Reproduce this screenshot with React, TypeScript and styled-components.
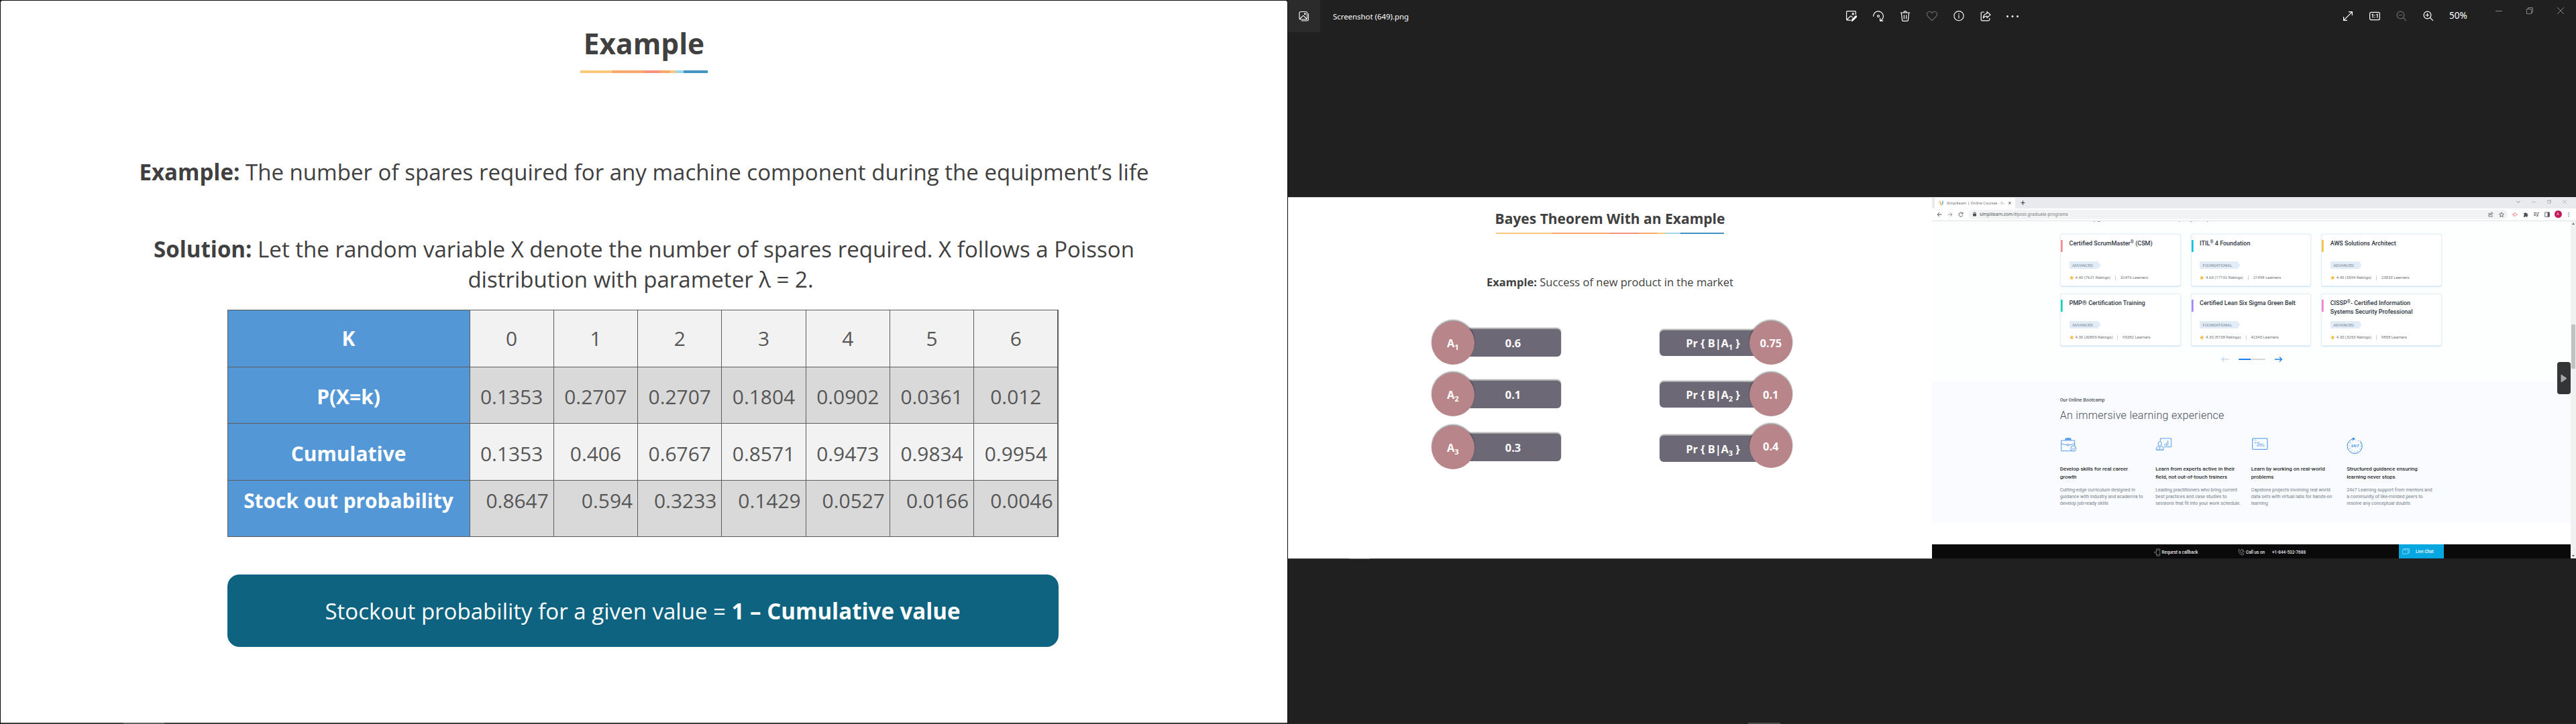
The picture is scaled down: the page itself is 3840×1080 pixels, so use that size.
import React, { ReactNode } from "react";
import styled, { createGlobalStyle } from "styled-components";

const GlobalStyle = createGlobalStyle`
  * { box-sizing: border-box; }
  html, body { margin: 0; padding: 0; }
  body { width: 3840px; height: 1080px; overflow: hidden; background: #202020; }
  p, h1, h2, h3 { margin: 0; font-weight: inherit; font-size: inherit; }
  svg { display: block; flex: none; }
`;

const slideFont = `"Open Sans", "Noto Sans", sans-serif`;
const siteFont = `Roboto, "Noto Sans", sans-serif`;
const uiFont = `"Noto Sans", "Open Sans", sans-serif`;

const Desktop = styled.div`
  display: flex;
  width: 3840px;
  height: 1080px;
`;

/* ---------- Poisson slide ---------- */

const Slide = styled.section`
  display: flex;
  flex-direction: column;
  align-items: center;
  width: 1920px;
  height: 1080px;
  background: #fff;
  border: 1px solid #0c0c10;
  border-bottom: 0;
  border-radius: 4px 4px 0 0;
  color: #404040;
  font-family: ${slideFont};
  font-size: 33.06px;
  line-height: 45px;
  white-space: nowrap;
`;

const SlideTitle = styled.h1`
  margin-top: 34px;
  font-size: 42.4px;
  line-height: 60px;
  font-weight: 700;
`;

const Rule = styled.div<{ $w: number; $h: number; $top: number }>`
  flex: none;
  width: ${(p) => p.$w}px;
  height: ${(p) => p.$h}px;
  margin-top: ${(p) => p.$top}px;
  background: linear-gradient(
    90deg,
    #fcc97c 0 24.6%,
    #faa76c 24.6% 50%,
    #f5937c 50% 62.7%,
    #faa76c 62.7% 70.6%,
    #fcc97c 70.6% 74.5%,
    #9dd5ea 74.5% 81%,
    #4294c1 81%
  );
`;

const Para = styled.p<{ $top: number; $size?: number }>`
  margin-top: ${(p) => p.$top}px;
  font-size: ${(p) => p.$size ?? 33.06}px;
  text-align: center;
`;

const SecondLine = styled.span`
  display: block;
  padding-right: 10px;
`;

const Grid = styled.div`
  display: grid;
  flex: none;
  grid-template-columns: 360px repeat(7, 1fr);
  grid-template-rows: repeat(4, 1fr);
  gap: 1px;
  width: 1239px;
  height: 339px;
  margin: 23px 4px 0 0;
  padding: 1px;
  background: #5c5c5c;
  font-size: 29.9px;
`;

const Cell = styled.div<{ $head?: boolean; $alt?: boolean; $last?: boolean; $drop?: number }>`
  display: flex;
  align-items: ${(p) => (p.$last ? "flex-start" : "center")};
  justify-content: ${(p) => (p.$last && !p.$head ? "flex-end" : "center")};
  padding-top: ${(p) => p.$drop ?? 0}px;
  padding-right: ${(p) => (p.$last && !p.$head ? 7 : 0)}px;
  background: ${(p) => (p.$head ? "#5497d7" : p.$alt ? "#d9d9d9" : "#f2f2f2")};
  color: ${(p) => (p.$head ? "#fff" : "#565656")};
  font-weight: ${(p) => (p.$head ? 700 : 400)};
`;

const Banner = styled.div`
  display: flex;
  flex: none;
  align-items: center;
  justify-content: center;
  width: 1239px;
  height: 108px;
  margin: 56px 4px 0 0;
  border-radius: 18px;
  background: #0d6380;
  color: #fff;
  white-space: pre;
`;

const PlayerBar = styled.div<{ $color: string; $from: number; $len: number; $hi: string; $h: number }>`
  flex: none;
  align-self: stretch;
  height: ${(p) => p.$h}px;
  margin-top: auto;
  background: linear-gradient(${(p) => p.$hi}, ${(p) => p.$hi}) ${(p) => p.$from}px 0 / ${(p) => p.$len}px 100% no-repeat
    ${(p) => p.$color};
`;

/* ---------- Photos window ---------- */

const Photos = styled.section`
  display: flex;
  flex-direction: column;
  width: 1920px;
  height: 1080px;
  background: #202020;
  color: #fff;
`;

const PhotosBar = styled.header`
  display: flex;
  flex: none;
  height: 48px;
  font-family: ${uiFont};
`;

const LibraryTile = styled.div`
  display: flex;
  align-items: center;
  justify-content: center;
  width: 48px;
  height: 48px;
  background: #2b2b2b;
`;

const FileName = styled.div`
  width: 772px;
  padding-left: 19px;
  font-size: 11.4px;
  line-height: 49px;
`;

const Tool = styled.div<{ $dim?: boolean; $gap?: number }>`
  display: flex;
  align-items: center;
  justify-content: center;
  width: 40px;
  height: 48px;
  margin-left: ${(p) => p.$gap ?? 0}px;
  color: ${(p) => (p.$dim ? "#6b6b6b" : "#fff")};
`;

const ZoomLevel = styled.div`
  width: 62px;
  padding-left: 11px;
  font-size: 13.6px;
  line-height: 46px;
`;

const WinButton = styled.div`
  display: flex;
  align-items: center;
  justify-content: center;
  width: 46px;
  height: 32px;
  color: #858585;
`;

const Photo = styled.div`
  display: flex;
  flex: none;
  height: 540px;
  margin-top: 246px;
`;

/* ---------- Bayes slide ---------- */

const MiniSlide = styled.div`
  display: flex;
  flex-direction: column;
  align-items: center;
  width: 960px;
  height: 540px;
  background: #fff;
  border-top: 1px solid #e4e4e4;
  color: #404040;
  font-family: ${slideFont};
  line-height: 22px;
  white-space: nowrap;
`;

const MiniTitle = styled.h2`
  margin-top: 16px;
  font-size: 21px;
  line-height: 30px;
  font-weight: 700;
`;

const PillBoard = styled.div`
  display: flex;
  justify-content: space-between;
  align-self: stretch;
  margin-top: 47px;
  padding: 0 208px 0 213.5px;
  color: #fff;
  font-size: 16.3px;
  font-weight: 700;
`;

const PillColumn = styled.div`
  display: flex;
  flex-direction: column;
`;

const Pill = styled.div<{ $top?: number }>`
  display: flex;
  align-items: center;
  height: 65px;
  margin-top: ${(p) => p.$top ?? 0}px;
`;

const Disc = styled.div<{ $side: "left" | "right" }>`
  display: flex;
  position: relative;
  z-index: 1;
  align-items: center;
  justify-content: center;
  width: 64.5px;
  height: 65px;
  margin: ${(p) => (p.$side === "left" ? "0 -14px 0 0" : "0 0 0 -26px")};
  border-radius: 50%;
  background: #b8868a;
  box-shadow: 0 -2px 2px rgba(0, 0, 0, 0.38);
  white-space: pre;
`;

const Bar = styled.div<{ $w: number; $h: number; $drop?: number }>`
  display: flex;
  align-items: center;
  justify-content: center;
  width: ${(p) => p.$w}px;
  height: ${(p) => p.$h}px;
  margin-top: ${(p) => p.$drop ?? 0}px;
  border-radius: 6px;
  background: #6d6875;
  box-shadow: 0 -2px 2px rgba(0, 0, 0, 0.38);
  white-space: pre;
`;

const Sub = styled.sub`
  font-size: 11px;
  line-height: 0;
  vertical-align: -3.5px;
`;

/* ---------- Browser ---------- */

const Browser = styled.div`
  display: flex;
  flex-direction: column;
  width: 960px;
  height: 539px;
  background: #fff;
  font-family: ${siteFont};
  color: #3a414c;
  white-space: nowrap;
`;

const TabStrip = styled.div`
  display: flex;
  height: 17px;
  padding-left: 4px;
  background: #e8eaed;
`;

const Tab = styled.div`
  display: flex;
  align-items: center;
  width: 120px;
  height: 16.5px;
  margin-top: 0.5px;
  padding-left: 7px;
  border-radius: 3px 3px 0 0;
  background: #fff;
  font-family: ${uiFont};
  color: #6a6d70;
`;

const TabLabel = styled.div`
  width: 88px;
  margin: 0 4px 0 5px;
  font-size: 5.6px;
  line-height: 12px;
  mask-image: linear-gradient(90deg, #000 76px, transparent 90px);
`;

const StripPlus = styled.div`
  width: 747px;
  padding: 4.5px 0 0 8px;
`;

const StripButtons = styled.div`
  display: flex;
  gap: 17px;
  padding-top: 4px;
  color: #9a9da0;
`;

const AddressRow = styled.div`
  display: flex;
  align-items: center;
  height: 18.5px;
  padding: 0 0 0 7px;
  border-bottom: 1px solid #dfe2e6;
  background: #fff;
  color: #55585c;
`;

const NavIcons = styled.div`
  display: flex;
  width: 47px;
  gap: 8px;
`;

const Omnibox = styled.div`
  display: flex;
  align-items: center;
  width: 804px;
  height: 13.5px;
  padding: 0 5px 0 7px;
  border-radius: 7px;
  background: #f1f3f4;
`;

const Url = styled.div`
  margin: 0 auto 0 5px;
  font-family: ${uiFont};
  font-size: 6.55px;
  line-height: 12px;
  color: #7b7e81;
`;

const Host = styled.span`
  color: #505356;
`;

const OmniActions = styled.div`
  display: flex;
  gap: 8px;
`;

const Extensions = styled.div`
  display: flex;
  align-items: center;
  gap: 8px;
  padding-left: 7px;
`;

const Avatar = styled.div`
  width: 11px;
  height: 11px;
  margin: 0 -1.5px;
  border-radius: 50%;
  background: #c2185b;
  color: #fff;
  font-size: 5px;
  line-height: 11px;
  text-align: center;
`;

const Viewport = styled.div`
  display: flex;
  height: 503.5px;
`;

const PageBody = styled.div`
  position: relative;
  display: flex;
  flex-direction: column;
  width: 952px;
  background: #fff;
`;

const Courses = styled.div`
  height: 240px;
  padding-left: 191px;
  background: #fdfefe;
`;

const CardGrid = styled.div`
  display: grid;
  grid-template-columns: repeat(3, 179.6px);
  grid-template-rows: repeat(2, 77.5px);
  gap: 11.5px 15px;
  margin-top: 18px;
`;

const Card = styled.article<{ $accent: string }>`
  display: flex;
  flex-direction: column;
  padding: 7px 0 0 12.5px;
  border: 0.5px solid #e6f0f8;
  border-radius: 3px;
  box-shadow: 0 0.7px 1.5px #cfe2f2;
  background: linear-gradient(${(p) => p.$accent}, ${(p) => p.$accent}) 0 7.5px / 2.7px 18px no-repeat #fff;
`;

const CourseName = styled.h3`
  height: 26px;
  margin-bottom: 7px;
  font-size: 9px;
  line-height: 13px;
  font-weight: 500;
  color: #2f3644;
`;

const Reg = styled.sup`
  font-size: 6.5px;
  line-height: 0;
  vertical-align: 3px;
`;

const Level = styled.div<{ $w: number }>`
  width: ${(p) => p.$w}px;
  height: 11px;
  padding-left: 4.5px;
  background: #e1ecf8;
  clip-path: polygon(0 0, calc(100% - 4px) 0, 100% 50%, calc(100% - 4px) 100%, 0 100%);
  color: #7b8790;
  font-size: 6px;
  line-height: 11px;
`;

const Stats = styled.div`
  display: flex;
  align-items: center;
  margin-top: 8px;
  color: #6f7377;
  font-size: 6px;
  line-height: 10px;
`;

const Rating = styled.span`
  margin-left: 2.5px;
`;

const Divider = styled.i`
  width: 0.7px;
  height: 7px;
  margin: 0 7px;
  background: #cdd1d5;
`;

const Pager = styled.div`
  display: flex;
  align-items: center;
  margin: 16.5px 0 0 240px;
`;

const Track = styled.div`
  width: 40px;
  height: 2.6px;
  margin: 0 14px;
  border-radius: 2px;
  background: linear-gradient(90deg, #1a7ff0 45%, #d4d8db 45%);
`;

const Bootcamp = styled.div`
  height: 210.5px;
  padding: 23.5px 0 0 190.7px;
  background: #f9fbff;
`;

const Eyebrow = styled.div`
  font-size: 7px;
  line-height: 9px;
  font-weight: 500;
  color: #51565e;
`;

const Headline = styled.h2`
  margin-top: 5.5px;
  font-size: 16px;
  line-height: 24px;
  font-weight: 300;
  letter-spacing: 0.3px;
  color: #4a4e57;
`;

const Features = styled.div`
  display: flex;
  margin-top: 21.5px;
`;

const Feature = styled.div`
  width: 142.5px;
`;

const FeatureArt = styled.div`
  height: 41px;
`;

const FeatureName = styled.h3`
  font-size: 8px;
  line-height: 12px;
  font-weight: 500;
  color: #2b2d31;
`;

const FeatureText = styled.p`
  margin-top: 7.5px;
  font-size: 7px;
  line-height: 10px;
  color: #75808a;
`;

const Footer = styled.footer`
  display: flex;
  align-items: center;
  height: 21px;
  margin-top: auto;
  padding: 2px 0 0 330px;
  background: #0a0a0a;
  color: #e9e9e9;
  font-size: 6.4px;
  font-weight: 500;
`;

const FootItem = styled.div<{ $w: number }>`
  display: flex;
  align-items: center;
  gap: 2px;
  width: ${(p) => p.$w}px;
`;

const Chat = styled.div`
  display: flex;
  align-items: center;
  gap: 9px;
  width: 66.7px;
  height: 21px;
  margin-top: -2px;
  padding-left: 5px;
  background: #06a7e0;
  color: #f2fbff;
`;

const SideTab = styled.div`
  position: absolute;
  right: 0;
  top: 210.5px;
  display: flex;
  align-items: center;
  justify-content: center;
  width: 20px;
  height: 48px;
  border-radius: 4px;
  background: #343536;
`;

const Scrollbar = styled.div`
  display: flex;
  flex-direction: column;
  align-items: center;
  width: 8px;
  padding: 2px 0;
  background: #f1f1f1;
`;

const Thumb = styled.div`
  width: 6.5px;
  height: 66px;
  margin: 149px 0 auto;
  background: #c1c1c1;
`;

/* ---------- Icons ---------- */

const Ico = ({ w = 16, h = 16, box, sw = 1, children }: { w?: number; h?: number; box?: string; sw?: number; children: ReactNode }) => (
  <svg width={w} height={h} viewBox={box ?? `0 0 ${w} ${h}`} fill="none" stroke="currentColor" strokeWidth={sw}>
    {children}
  </svg>
);

const LibraryIcon = () => (
  <Ico sw={1.1}>
    <rect x="1" y="1.5" width="11.5" height="11.5" rx="2" />
    <path d="M14.5 4v8.5q0 2.5-2.5 2.5H4M1.8 12l4.2-4.2q.8-.8 1.6 0l4.2 4.2" />
    <circle cx="9.3" cy="4.7" r=".9" />
  </Ico>
);
const EditIcon = () => (
  <Ico sw={1.2}>
    <path d="M7 14.2H2q-1.4 0-1.4-1.4V2Q.6.6 2 .6h11Q14.4.6 14.4 2v4M1 13.5l5.2-5.2q.8-.8 1.6 0L9.5 10" />
    <circle cx="10.3" cy="4.8" r="1.2" />
    <path d="M8.3 15.7l.7-2.8 5-5q.7-.6 1.4 0t0 1.5l-5 5z" fill="currentColor" />
  </Ico>
);
const RotateIcon = () => (
  <Ico sw={1.2}>
    <path d="M.6 8.6A7.4 7.4 0 1 1 11 15M15.2 15.2H10.6V10.8" />
    <circle cx="8" cy="8" r="1.5" />
  </Ico>
);
const TrashIcon = () => (
  <Ico sw={1.2}>
    <path d="M.8 3h14.4M5.6 2.8Q6 .7 8 .7t2.400 2.1M2.400 3.200l1.200 10.900q.2 1.200 1.400 1.200h6q1.200 0 1.400-1.200l1.200-10.900M6.400 6.200v6M9.600 6.200v6" />
  </Ico>
);
const HeartIcon = () => (
  <Ico sw={1.1}>
    <path d="M8 14.600L1.700 8.300C-.6 5.800.6 1.200 4.300 1.200 6 1.200 7.200 2.200 8 3.400 8.800 2.200 10 1.200 11.700 1.200c3.700 0 4.900 4.600 2.600 7.100z" />
  </Ico>
);
const InfoIcon = () => (
  <Ico sw={1.1}>
    <circle cx="8" cy="7.7" r="7.1" />
    <path d="M8 6.6v5M8 4v1.4" />
  </Ico>
);
const ShareIcon = () => (
  <Ico sw={1.2}>
    <path d="M6 2H3Q1.2 2 1.2 3.8v9Q1.2 14.8 3 14.8h9q1.8 0 1.8-1.8v-2" />
    <path d="M10 1.4l5 4.6-5 4.6V8Q6.4 8 4.4 11 4.8 4.8 10 4.2z" strokeLinejoin="round" />
  </Ico>
);
const MoreIcon = () => (
  <svg width="18" height="3" viewBox="0 0 18 3" fill="currentColor">
    <circle cx="1.5" cy="1.5" r="1.4" />
    <circle cx="9" cy="1.5" r="1.4" />
    <circle cx="16.5" cy="1.5" r="1.4" />
  </svg>
);
const ExpandIcon = () => (
  <Ico sw={1.2}>
    <path d="M1.6 14.4L14.4 1.6M9 1.6h5.4V7M1.6 9v5.4H7" />
  </Ico>
);
const ActualSizeIcon = () => (
  <Ico sw={1.2}>
    <rect x=".6" y="2.4" width="14.8" height="11.2" rx="2" />
    <path d="M3.6 6l1.5-.8v5.6M10.4 6l1.5-.8v5.6M8 6v1.2M8 9.2v1.2" />
  </Ico>
);
const MagnifierIcon = ({ plus }: { plus?: boolean }) => (
  <Ico sw={1.2}>
    <circle cx="6.5" cy="6.5" r="5.4" />
    <path d={"M10.5 10.5l4.4 4.4M3.7 6.5h5.6" + (plus ? "M6.5 3.7v5.6" : "")} />
  </Ico>
);
const MinimizeIcon = ({ s = 10 }: { s?: number }) => (
  <Ico w={s} h={s} box="0 0 10 10">
    <path d="M0 5.5h10" />
  </Ico>
);
const RestoreIcon = ({ s = 10 }: { s?: number }) => (
  <Ico w={s} h={s} box="0 0 10 10">
    <path d="M.5 2.5h7v7h-7zM2.5 2.5v-2h7v7h-2" />
  </Ico>
);
const CloseIcon = ({ s = 10 }: { s?: number }) => (
  <Ico w={s} h={s} box="0 0 10 10">
    <path d="M0 0l10 10M10 0L0 10" />
  </Ico>
);
const StarIcon = () => (
  <svg width="6.5" height="6.5" viewBox="0 0 20 20">
    <path d="M10 0l3 6.6 7 .8-5.2 4.8 1.4 7L10 15.7l-6.2 3.5 1.4-7L0 7.4l7-.8z" fill="#f9b93c" />
  </svg>
);
const ArrowIcon = ({ color, flip }: { color: string; flip?: boolean }) => (
  <svg width="11.5" height="8" viewBox="0 0 23 16" fill="none" stroke={color} strokeWidth="2.6">
    <path d={flip ? "M23 8H2M9 1L2 8l7 7" : "M0 8h21M14 1l7 7-7 7"} />
  </svg>
);
/* Descenders of the paragraph scrolled under the address bar. */
const ScrolledEdge = () => (
  <svg width="240" height="1.5" viewBox="0 0 240 1.5" fill="none" stroke="#8d9398" strokeWidth="1">
    <path d="M50 .6h1.500M56 .6h3.500M178 0v1.200M194 .6h1.800M219.500 0v1.200" />
  </svg>
);
const BriefcaseIcon = () => (
  <svg width="25" height="21" viewBox="0 0 75 63" fill="none" stroke="#3f8fe6" strokeWidth="2.6">
    <path d="M5 12h60v47H5zM5 26q15 6 26 6M65 26q-15 6-26 6" />
    <path d="M24 11q0-8 6-8h12q6 0 6 8M28 8h16" strokeWidth="4" />
    <circle cx="35" cy="32" r="4" />
    <circle cx="59" cy="48" r="12" fill="#f9fbff" />
    <path d="M53 48l5 5 8-9" />
  </svg>
);
const TrainerIcon = () => (
  <svg width="25" height="21" viewBox="0 0 75 63" fill="none" stroke="#3f8fe6" strokeWidth="2.6">
    <path d="M22 16V3h49v38H38M42 36v-9M49 36V22M56 36V12" />
    <ellipse cx="20" cy="27" rx="8" ry="10" />
    <path d="M4 55V46q2-6 10-8l6 6 6-6q8 2 10 8v9zM20 44v10M11 55v-6M29 55v-6" />
  </svg>
);
const CodeIcon = () => (
  <svg width="25" height="21" viewBox="0 0 75 63" fill="none" stroke="#3f8fe6" strokeWidth="3">
    <rect x="5" y="3" width="67" height="49" rx="2" />
    <path d="M10 10h13" strokeDasharray="3 2" strokeWidth="2" />
    <path d="M20 19l-4 3 4 3M24 22h12M28 29h25M24 36h12M40 36h10M54 33l4 3-4 3" strokeWidth="2.6" />
  </svg>
);
const ClockIcon = () => (
  <svg width="26" height="25" viewBox="0 0 78 75" fill="none" stroke="#2f86de" strokeWidth="3">
    <path d="M32 4.5A33 33 0 1 0 60 14" />
    <path d="M28 0l9 4.500-8 5z" fill="#2f86de" />
    <circle cx="38" cy="36" r="26" strokeDasharray="2 11.6" strokeWidth="4" />
    <text x="38" y="42" fontSize="17" fontWeight="700" textAnchor="middle" fill="#2f86de" stroke="none" fontFamily="Roboto, sans-serif">
      24/7
    </text>
  </svg>
);

/* ---------- Data ---------- */

const rows = [
  { name: "K", drop: 0, values: ["0", "1", "2", "3", "4", "5", "6"] },
  { name: "P(X=k)", drop: 5, values: ["0.1353", "0.2707", "0.2707", "0.1804", "0.0902", "0.0361", "0.012"] },
  { name: "Cumulative", drop: 5, values: ["0.1353", "0.406", "0.6767", "0.8571", "0.9473", "0.9834", "0.9954"] },
  { name: "Stock out probability", drop: 7, values: ["0.8647", "0.594", "0.3233", "0.1429", "0.0527", "0.0166", "0.0046"] },
];

const priors = [
  { index: 1, value: "0.6", top: 0 },
  { index: 2, value: "0.1", top: 12 },
  { index: 3, value: "0.3", top: 14 },
];

const likelihoods = [
  { index: 1, value: "0.75", top: 0, drop: 1 },
  { index: 2, value: "0.1", top: 12, drop: 1 },
  { index: 3, value: "0.4", top: 12, drop: 8 },
];

const courses = [
  { accent: "#ff8a8d", name: <>Certified ScrumMaster<Reg>®</Reg> (CSM)</>, level: "ADVANCED", rating: "4.40 (7621 Ratings)", learners: "32476 Learners" },
  { accent: "#0fc2e0", name: <>ITIL<Reg>®</Reg> 4 Foundation</>, level: "FOUNDATIONAL", rating: "4.60 (17192 Ratings)", learners: "21498 Learners" },
  { accent: "#f4c13f", name: <>AWS Solutions Architect</>, level: "ADVANCED", rating: "4.40 (5594 Ratings)", learners: "23833 Learners" },
  { accent: "#12d3b4", name: <>PMP® Certification Training</>, level: "ADVANCED", rating: "4.30 (30895 Ratings)", learners: "95382 Learners" },
  { accent: "#a685ee", name: <>Certified Lean Six Sigma Green Belt</>, level: "FOUNDATIONAL", rating: "4.30 (8738 Ratings)", learners: "42345 Learners" },
  { accent: "#f07fd0", name: <>CISSP<Reg>®</Reg>- Certified Information<br />Systems Security Professional</>, level: "ADVANCED", rating: "4.30 (3253 Ratings)", learners: "9858 Learners" },
];

const features = [
  { art: <BriefcaseIcon />, name: ["Develop skills for real career", "growth"], text: ["Cutting-edge curriculum designed in", "guidance with industry and academia to", "develop job-ready skills"] },
  { art: <TrainerIcon />, name: ["Learn from experts active in their", "field, not out-of-touch trainers"], text: ["Leading practitioners who bring current", "best practices and case studies to", "sessions that fit into your work schedule."] },
  { art: <CodeIcon />, name: ["Learn by working on real-world", "problems"], text: ["Capstone projects involving real world", "data sets with virtual labs for hands-on", "learning"] },
  { art: <ClockIcon />, name: ["Structured guidance ensuring", "learning never stops"], text: ["24x7 Learning support from mentors and", "a community of like-minded peers to", "resolve any conceptual doubts"] },
];

const Lines = ({ items }: { items: string[] }) => (
  <>
    {items.map((t, i) => (
      <React.Fragment key={t}>
        {i > 0 && <br />}
        {t}
      </React.Fragment>
    ))}
  </>
);

/* ---------- Sections ---------- */

const PoissonSlide = () => (
  <Slide>
    <SlideTitle>Example</SlideTitle>
    <Rule $w={190} $h={4} $top={10} />
    <Para $top={125}>
      <b>Example:</b> The number of spares required for any machine component during the equipment’s life
    </Para>
    <Para $top={70}>
      <b>Solution:</b> Let the random variable X denote the number of spares required. X follows a Poisson
      <SecondLine>distribution with parameter λ = 2.</SecondLine>
    </Para>
    <Grid>
      {rows.map((row, r) => (
        <React.Fragment key={row.name}>
          <Cell $head $last={r === 3} $drop={row.drop}>{row.name}</Cell>
          {row.values.map((v, i) => (
            <Cell key={i} $alt={r % 2 === 1} $last={r === 3} $drop={row.drop}>{v}</Cell>
          ))}
        </React.Fragment>
      ))}
    </Grid>
    <Banner>
      <span>Stockout probability for a given value = <b>1 – Cumulative value</b></span>
    </Banner>
    <PlayerBar $color="#3f3e40" $hi="#636264" $from={183} $len={61} $h={2} />
  </Slide>
);

const BayesSlide = () => (
  <MiniSlide>
    <MiniTitle>Bayes Theorem With an Example</MiniTitle>
    <Rule $w={340} $h={2} $top={6} />
    <Para $top={61} $size={16.5}>
      <b>Example:</b> Success of new product in the market
    </Para>
    <PillBoard>
      <PillColumn>
        {priors.map((p) => (
          <Pill key={p.index} $top={p.top}>
            <Disc $side="left"><span>A<Sub>{p.index}</Sub></span></Disc>
            <Bar $w={143} $h={41}>{p.value}</Bar>
          </Pill>
        ))}
      </PillColumn>
      <PillColumn>
        {likelihoods.map((p) => (
          <Pill key={p.index} $top={p.top}>
            <Bar $w={160} $h={38.5} $drop={p.drop}><span>{"Pr { B|A"}<Sub>{p.index}</Sub>{" }"}</span></Bar>
            <Disc $side="right">{p.value}</Disc>
          </Pill>
        ))}
      </PillColumn>
    </PillBoard>
    <PlayerBar $color="#4a4b4a" $hi="#7b7d7b" $from={92} $len={30} $h={1} />
  </MiniSlide>
);

const BrowserWindow = () => (
  <Browser>
    <TabStrip>
      <Tab>
        <svg width="6" height="8" viewBox="0 0 12 16" fill="none" strokeWidth="2.5">
          <path d="M2 1v8l3 4" stroke="#f7a44a" />
          <path d="M10 1v8l-3 4" stroke="#36a9e1" />
          <path d="M6 5v11" stroke="#fbd08a" />
        </svg>
        <TabLabel>Simplilearn | Online Courses - Bo</TabLabel>
        <Ico w={4} h={4} box="0 0 10 10" sw={3}><path d="M1 1l8 8M9 1L1 9" /></Ico>
      </Tab>
      <StripPlus>
        <Ico w={7} h={7} box="0 0 14 14" sw={2.4}><path d="M7 1v12M1 7h12" /></Ico>
      </StripPlus>
      <StripButtons>
        <Ico w={6} h={6} box="0 0 12 12" sw={2}><path d="M1 3l5 6 5-6" /></Ico>
        <MinimizeIcon s={6} />
        <RestoreIcon s={6} />
        <CloseIcon s={6} />
      </StripButtons>
    </TabStrip>
    <AddressRow>
      <NavIcons>
        <Ico w={8} h={8} box="0 0 16 16" sw={2}><path d="M15 8H2M8 2L2 8l6 6" /></Ico>
        <Ico w={8} h={8} box="0 0 16 16" sw={1.2}><path d="M1 8h13M8 2l6 6-6 6" /></Ico>
        <Ico w={8} h={8} box="0 0 16 16" sw={2}><path d="M13.5 10.5A6 6 0 1 1 12.5 4M14 1v5H9" /></Ico>
      </NavIcons>
      <Omnibox>
        <svg width="5" height="7" viewBox="0 0 10 14"><path d="M0 5h10v8H0z" fill="#505356" /><path d="M2.5 5V1.500h5V5" fill="none" stroke="#505356" strokeWidth="1.5" /></svg>
        <Url><Host>simplilearn.com</Host>/#post-graduate-programs</Url>
        <OmniActions>
          <Ico w={8} h={8} box="0 0 16 16" sw={1.5}><path d="M5 4H2v10h11v-3M10 1l5 4-5 4V7Q6 7 5 10 5 4 10 3.500z" /></Ico>
          <Ico w={8} h={8} box="0 0 16 16" sw={1.7}><path d="M8 1.5l2 4.500 5 .5-3.700 3.300 1 5L8 12.300 3.700 14.800l1-5L1 6.500 6 6z" /></Ico>
        </OmniActions>
      </Omnibox>
      <Extensions>
        <svg width="8" height="8" viewBox="0 0 16 16" fill="none" stroke="#f4564f" strokeWidth="1.6"><path d="M5 5l3-2 3 2M5 11l3 2 3-2M11 5l4 3-4 3M5 5v6M0 8h3" /></svg>
        <svg width="8" height="8" viewBox="0 0 16 16" fill="#505356"><path d="M2 4h3.500a2 2 0 1 1 4 0H13v4a2 2 0 1 1 0 4v3.500H9.500a2 2 0 0 0-4 0H2V11a2 2 0 0 0 0-4z" /></svg>
        <Ico w={8} h={8} box="0 0 16 16" sw={1.8}><path d="M0 3h9M0 7h9M0 11h6M12 12V3h4" /><circle cx="10.5" cy="12" r="1.6" /></Ico>
        <Ico w={8} h={8} box="0 0 16 16" sw={1.8}><path d="M1.5 1.500h13v13h-13z" /><path d="M10 2h4v12h-4z" fill="currentColor" /></Ico>
        <Avatar>A</Avatar>
        <svg width="8" height="8" viewBox="0 0 16 16" fill="#505356"><circle cx="8" cy="3" r="1.4" /><circle cx="8" cy="8" r="1.4" /><circle cx="8" cy="13" r="1.4" /></svg>
      </Extensions>
    </AddressRow>
    <Viewport>
      <PageBody>
        <Courses>
          <ScrolledEdge />
          <CardGrid>
            {courses.map((c) => (
              <Card key={c.rating} $accent={c.accent}>
                <CourseName>{c.name}</CourseName>
                <Level $w={c.level === "ADVANCED" ? 47 : 60.3}>{c.level}</Level>
                <Stats>
                  <StarIcon />
                  <Rating>{c.rating}</Rating>
                  <Divider />
                  <span>{c.learners}</span>
                </Stats>
              </Card>
            ))}
          </CardGrid>
          <Pager>
            <ArrowIcon color="#c3d9ee" flip />
            <Track />
            <ArrowIcon color="#1a7ff0" />
          </Pager>
        </Courses>
        <Bootcamp>
          <Eyebrow>Our Online Bootcamp</Eyebrow>
          <Headline>An immersive learning experience</Headline>
          <Features>
            {features.map((f) => (
              <Feature key={f.name[0]}>
                <FeatureArt>{f.art}</FeatureArt>
                <FeatureName><Lines items={f.name} /></FeatureName>
                <FeatureText><Lines items={f.text} /></FeatureText>
              </Feature>
            ))}
          </Features>
        </Bootcamp>
        <Footer>
          <FootItem $w={125.5}>
            <svg width="10.5" height="12" viewBox="0 0 31 36" fill="none" stroke="#9a9a9a" strokeWidth="2"><rect x="13" y="2" width="16" height="32" rx="3" /><path d="M13 8h16M13 28h16M9 13l-5 5 5 5M4 18h6" /></svg>
            Request a callback
          </FootItem>
          <FootItem $w={51.5}>
            <svg width="10.5" height="11" viewBox="0 0 32 33" fill="none" stroke="#b5b5b5" strokeWidth="2"><path d="M4 6q4-4 8 4-2 3-1 5t5 6q3 0 4-1l7 5q-2 5-6 5Q5 26 3 10zM15 3q12 1 14 14M16 9q6 1 8 8" /></svg>
            Call us on
          </FootItem>
          <FootItem $w={189}>+1-844-532-7688</FootItem>
          <Chat>
            <svg width="11" height="10" viewBox="0 0 33 30" fill="none" stroke="#c9efff" strokeWidth="1.8"><path d="M1 6h26v18H12l-4 4v-4H1zM6 6V2h26v17h-5" /></svg>
            <span>Live Chat</span>
          </Chat>
        </Footer>
        <SideTab>
          <svg width="10" height="13" viewBox="0 0 10 13"><path d="M1 1l8 5.500-8 5.500z" fill="#a9a9a9" stroke="#a9a9a9" strokeLinejoin="round" /></svg>
        </SideTab>
      </PageBody>
      <Scrollbar>
        <svg width="4" height="3" viewBox="0 0 8 6"><path d="M0 6l4-5 4 5z" fill="#505050" /></svg>
        <Thumb />
        <svg width="4" height="3" viewBox="0 0 8 6"><path d="M0 0l4 5 4-5z" fill="#505050" /></svg>
      </Scrollbar>
    </Viewport>
  </Browser>
);

export default function App() {
  return (
    <>
      <GlobalStyle />
      <Desktop>
        <PoissonSlide />
        <Photos>
          <PhotosBar>
            <LibraryTile><LibraryIcon /></LibraryTile>
            <FileName>Screenshot (649).png</FileName>
            <Tool><EditIcon /></Tool>
            <Tool><RotateIcon /></Tool>
            <Tool><TrashIcon /></Tool>
            <Tool $dim><HeartIcon /></Tool>
            <Tool><InfoIcon /></Tool>
            <Tool><ShareIcon /></Tool>
            <Tool><MoreIcon /></Tool>
            <Tool $gap={460}><ExpandIcon /></Tool>
            <Tool><ActualSizeIcon /></Tool>
            <Tool $dim><MagnifierIcon /></Tool>
            <Tool><MagnifierIcon plus /></Tool>
            <ZoomLevel>50%</ZoomLevel>
            <WinButton><MinimizeIcon /></WinButton>
            <WinButton><RestoreIcon /></WinButton>
            <WinButton><CloseIcon /></WinButton>
          </PhotosBar>
          <Photo>
            <BayesSlide />
            <BrowserWindow />
          </Photo>
          <PlayerBar $color="#242424" $hi="#4d4d4d" $from={686} $len={48} $h={2} />
        </Photos>
      </Desktop>
    </>
  );
}
